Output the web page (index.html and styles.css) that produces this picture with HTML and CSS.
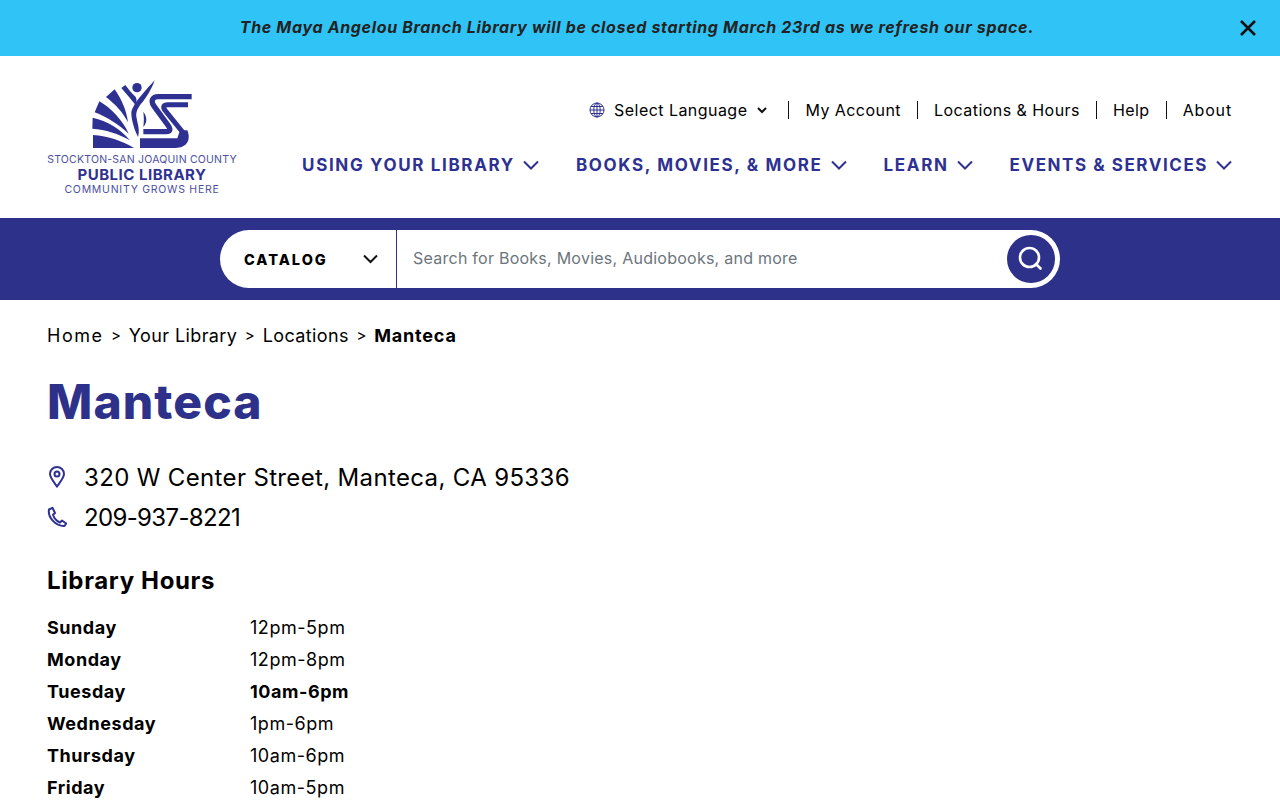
FILE: index.html
```html
<!DOCTYPE html>
<html lang="en">
<head>
    <meta charset="UTF-8">
    <meta name="viewport" content="width=device-width, initial-scale=1.0">
    <title>Manteca - Stockton-San Joaquin County Public Library</title>
    <link rel="stylesheet" href="styles.css">
</head>
<body>

<div class="alert">
    <p>The Maya Angelou Branch Library will be closed starting March 23rd as we refresh our space.</p>
    <button class="alert-close" aria-label="Close">
        <svg width="18" height="18" viewBox="0 0 18 18"><path d="M2 2l14 14M16 2L2 16" stroke="#111" stroke-width="2.6" fill="none"/></svg>
    </button>
</div>

<header class="site-header">
    <a class="logo" href="#">
        <svg class="logo-mark" width="108" height="76" viewBox="0 0 324 228">
            <g fill="#2e3192">
                <path d="M15 174C60 177 105 193 138 213H15Z"/>
                <path d="M14 122C58 132 97 155 126 190C92 170 52 158 13 155Z"/>
                <path d="M34 73C68 92 104 130 122 170C92 142 56 120 20 106Z"/>
                <path d="M54 60L80 37C100 66 116 100 120 136C105 106 82 82 54 60Z"/>
                <circle cx="147" cy="32" r="14"/>
                <path d="M100 33L112 24C122 38 132 50 143 60C147 68 146 76 143 84C130 68 114 50 100 33Z"/>
                <path d="M200 10C192 34 176 62 158 82C148 96 142 108 146 124C150 146 156 160 150 180C140 160 130 130 130 108C132 90 148 66 200 10Z"/>
                <path d="M166 104C176 118 180 134 166 150C168 134 168 120 166 104Z"/>
                <path d="M156 184H268L276 160L298 160C310 190 296 213 262 213H156Z"/>
            </g>
            <g fill="none" stroke="#2e3192">
                <path stroke-width="16" d="M311 59H212C192 59 188 72 197 86L241 146C250 160 244 164 236 164H166"/>
                <path stroke-width="15" d="M300 83H240C226 83 224 90 231 100L286 168"/>
            </g>
        </svg>
        <span class="logo-county">STOCKTON-SAN JOAQUIN COUNTY</span>
        <span class="logo-name">PUBLIC LIBRARY</span>
        <span class="logo-tag">COMMUNITY GROWS HERE</span>
    </a>

    <div class="header-nav">
        <ul class="top-links">
            <li class="lang">
                <svg width="16" height="16" viewBox="0 0 16 16" fill="none" stroke="#2e3192" stroke-width="1">
                    <circle cx="8" cy="8" r="7"/>
                    <ellipse cx="8" cy="8" rx="3.2" ry="7"/>
                    <path d="M1 8h14M2 4.5h12M2 11.5h12M8 1v14"/>
                </svg>
                Select Language
                <svg class="lang-caret" width="10" height="7" viewBox="0 0 10 7"><path d="M1 1l4 4 4-4" stroke="#111" stroke-width="2" fill="none"/></svg>
            </li>
            <li>My Account</li>
            <li>Locations &amp; Hours</li>
            <li>Help</li>
            <li>About</li>
        </ul>
        <ul class="main-links">
            <li>USING YOUR LIBRARY <svg width="16" height="10" viewBox="0 0 16 10"><path d="M1 1.5l7 7 7-7" stroke="#2e3192" stroke-width="2" fill="none"/></svg></li>
            <li>BOOKS, MOVIES, &amp; MORE <svg width="16" height="10" viewBox="0 0 16 10"><path d="M1 1.5l7 7 7-7" stroke="#2e3192" stroke-width="2" fill="none"/></svg></li>
            <li>LEARN <svg width="16" height="10" viewBox="0 0 16 10"><path d="M1 1.5l7 7 7-7" stroke="#2e3192" stroke-width="2" fill="none"/></svg></li>
            <li>EVENTS &amp; SERVICES <svg width="16" height="10" viewBox="0 0 16 10"><path d="M1 1.5l7 7 7-7" stroke="#2e3192" stroke-width="2" fill="none"/></svg></li>
        </ul>
    </div>
</header>

<div class="search-band">
    <form class="search-box">
        <div class="search-type">
            <span>CATALOG</span>
            <svg width="15" height="10" viewBox="0 0 15 10"><path d="M1 1.5l6.5 6.5L14 1.5" stroke="#111" stroke-width="2" fill="none"/></svg>
        </div>
        <div class="search-input">Search for Books, Movies, Audiobooks, and more</div>
        <button class="search-btn" aria-label="Search">
            <svg width="26" height="26" viewBox="1 1 26 26" fill="none" stroke="#fff" stroke-width="2.6"><circle cx="12.500" cy="12.500" r="9.500"/><path d="M19 19l4.500 4.500" stroke-linecap="round"/></svg>
        </button>
    </form>
</div>

<main class="content">
    <nav class="crumbs">
        <span>Home</span><i>&gt;</i><span>Your Library</span><i>&gt;</i><span>Locations</span><i>&gt;</i><b>Manteca</b>
    </nav>

    <h1>Manteca</h1>

    <div class="contact">
        <svg width="20" height="22" viewBox="0 0 20 22" fill="none" stroke="#2e3192" stroke-width="2"><path d="M10 20.5C6 15 3 11.500 3 8a7 7 0 0 1 14 0c0 3.500-3 7-7 12.500Z"/><circle cx="10" cy="8" r="2.500"/></svg>
        320 W Center Street, Manteca, CA 95336
    </div>
    <div class="contact phone">
        <svg width="20" height="22" viewBox="0 0 20 22" fill="none" stroke="#2e3192" stroke-width="2"><path d="M2 3.500L5.500 1.800 8 7 6 8.800C7 12 9.500 15 13 16.500L15 14.500 19.200 17.500 17.500 20C9 20.500 .5 11.500 2 3.500Z" stroke-linejoin="round"/></svg>
        209-937-8221
    </div>

    <h2>Library Hours</h2>

    <div class="hours">
        <b>Sunday</b><span>12pm-5pm</span>
        <b>Monday</b><span>12pm-8pm</span>
        <b>Tuesday</b><b>10am-6pm</b>
        <b>Wednesday</b><span>1pm-6pm</span>
        <b>Thursday</b><span>10am-6pm</span>
        <b>Friday</b><span>10am-5pm</span>
    </div>
</main>

</body>
</html>
```

FILE: styles.css
```css
body {
    margin: 0;
    font-family: Inter, "Open Sans", Arial, sans-serif;
    color: #000;
    background-color: #fff;
}

ul {
    list-style: none;
    margin: 0;
    padding: 0;
}

/* alert bar */
.alert {
    display: flex;
    align-items: center;
    justify-content: center;
    height: 56px;
    padding-bottom: 2px;
    box-sizing: border-box;
    background-color: #30c4f6;
    position: relative;
}

.alert p {
    margin: 0;
    font-size: 16px;
    font-weight: 700;
    font-style: italic;
    color: #222;
    letter-spacing: 0.66px;
    position: relative;
    left: -3px;
}

.alert-close {
    position: absolute;
    right: 23px;
    top: 19px;
    padding: 0;
    border: none;
    background: none;
    display: flex;
}

/* header */
.site-header {
    display: flex;
    justify-content: space-between;
    height: 162px;
    padding: 0 48px 0 47px;
}

.logo {
    display: flex;
    flex-direction: column;
    align-items: center;
    width: 190px;
    padding-top: 21px;
    color: #2e3192;
    text-decoration: none;
}

.logo-county,
.logo-tag {
    font-size: 10.500px;
    line-height: 14px;
    color: #4b4fa0;
    white-space: nowrap;
}

.logo-county {
    letter-spacing: 0.22px;
}

.logo-tag {
    letter-spacing: 0.75px;
}

.logo-name {
    font-size: 15px;
    line-height: 16px;
    font-weight: 700;
    letter-spacing: 0.5px;
    white-space: nowrap;
}

.header-nav {
    display: flex;
    flex-direction: column;
    align-items: flex-end;
    padding-top: 45px;
}

.top-links {
    display: flex;
    align-items: center;
    font-size: 16px;
    line-height: 18px;
}

.top-links li {
    padding: 0 16px;
    border-left: 1px solid #111;
    letter-spacing: 0.45px;
}

.top-links li:first-child {
    border-left: none;
}

.top-links li:last-child {
    padding-right: 0;
    letter-spacing: 0.85px;
}

.lang {
    display: flex;
    align-items: center;
    gap: 9px;
    padding-right: 21px !important;
}

.lang-caret {
    margin-left: 1px;
}

.main-links {
    display: flex;
    gap: 37px;
    margin-top: 34px;
    font-size: 17px;
    line-height: 24px;
    font-weight: 700;
    color: #2e3192;
    letter-spacing: 1.65px;
}

.main-links li {
    display: flex;
    align-items: center;
    gap: 8px;
    white-space: nowrap;
}

.main-links li:last-child {
    letter-spacing: 1.55px;
}

/* search */
.search-band {
    display: flex;
    justify-content: center;
    height: 82px;
    align-items: center;
    background-color: #2e3189;
}

.search-box {
    display: flex;
    align-items: center;
    width: 840px;
    height: 58px;
    background-color: #fff;
    border-radius: 29px;
}

.search-type {
    display: flex;
    align-items: center;
    justify-content: space-between;
    width: 177px;
    height: 100%;
    box-sizing: border-box;
    padding: 0 18px 0 24px;
    border-right: 1px solid #2e3189;
    font-size: 14.500px;
    font-weight: 800;
    letter-spacing: 2px;
}

.search-input {
    flex: 1;
    padding: 0 0 2px 16px;
    font-size: 16px;
    color: #6c757d;
    letter-spacing: 0.25px;
}

.search-btn {
    display: flex;
    align-items: center;
    justify-content: center;
    width: 48px;
    height: 48px;
    margin-right: 5px;
    padding: 0;
    border: none;
    border-radius: 50%;
    background-color: #2e3189;
}

/* page content */
.content {
    padding: 24px 47px 0;
}

.crumbs {
    display: flex;
    align-items: center;
    font-size: 18px;
    line-height: 24px;
    letter-spacing: 0.4px;
}

.crumbs span:first-child {
    letter-spacing: 1.5px;
}

.crumbs b {
    letter-spacing: 0.8px;
}

.crumbs i {
    font-style: normal;
    font-size: 15px;
    margin: 0 7.500px;
}

h1 {
    margin: 24px 0 0;
    font-size: 48px;
    line-height: 60px;
    font-weight: 800;
    color: #2e3189;
    letter-spacing: 1.1px;
}

.contact {
    display: flex;
    align-items: center;
    gap: 17px;
    height: 40px;
    font-size: 24px;
    letter-spacing: 0.35px;
}

.contact:first-of-type {
    margin-top: 25px;
}

.phone {
    letter-spacing: -0.65px;
}

h2 {
    margin: 28px 0 0;
    font-size: 24px;
    line-height: 32px;
    font-weight: 700;
    color: #000;
    letter-spacing: 0.65px;
}

.hours {
    display: grid;
    grid-template-columns: 203px 1fr;
    grid-auto-rows: 32px;
    align-items: center;
    margin-top: 14px;
    font-size: 18px;
    letter-spacing: 0.55px;
}
```
